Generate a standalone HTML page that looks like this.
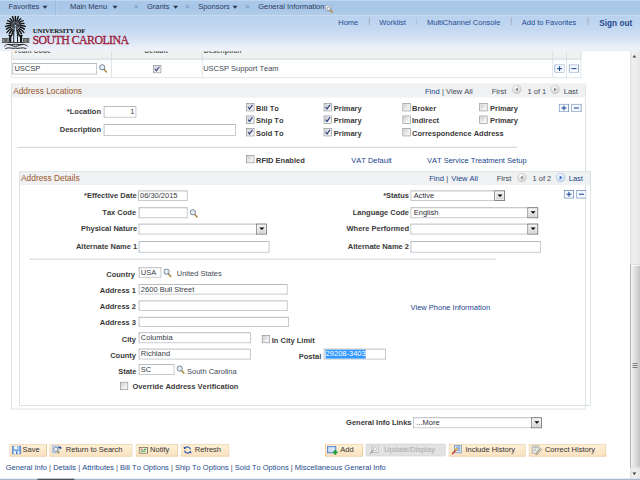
<!DOCTYPE html>
<html><head><meta charset="utf-8"><title>General Information</title>
<style>
html,body{margin:0;padding:0;background:#fff;overflow:hidden}
body{width:640px;height:480px;position:relative;font-family:"Liberation Sans",Arial,sans-serif}
#pg{font-kerning:none;position:absolute;left:0;top:0;width:1024px;height:768px;transform:scale(0.625);transform-origin:0 0;background:#fff;overflow:hidden;font-size:12px;color:#3c3c3c}
#pg div,#pg svg.ab{position:absolute}
.t{white-space:nowrap;line-height:14px;height:14px;font-size:12px}
#nav{left:0;top:0;width:1024px;height:25px;background:linear-gradient(#bdd5ef 0,#bdd5ef 1px,#a9c7e8 2px,#a9c7e8 60%,#b1cdea 100%)}
#nav .sep{top:0;width:1px;height:25px;background:#94b4da;box-shadow:1px 0 0 #c9def3}
.nv{color:#2c3b60}
.nv.gtt{color:#5f7faf;font-size:12px}
.dd{width:0;height:0;border-left:4px solid transparent;border-right:4px solid transparent;border-top:5px solid #2c3448}
#hdr{left:0;top:25px;width:1024px;height:56.5px;background:linear-gradient(#bad2ee 0,#c2d7f0 35%,#d2e0f3 60%,#e2ebf7 82%,#f0f4fa 100%);border-bottom:1px solid #d9dde2;box-sizing:border-box}
.lg1{font-family:"Liberation Serif",serif;font-weight:bold;font-size:11px;color:#111;letter-spacing:-0.25px;line-height:14px}
.lg2{font-family:"Liberation Serif",serif;font-size:21px;color:#9b1a3a;letter-spacing:-0.93px;line-height:28px;height:28px;-webkit-text-stroke:0.5px #9b1a3a;transform:scaleX(0.9);transform-origin:0 0}
.hl{color:#1f4c94}
.so{font-weight:bold;font-size:13.2px;color:#27498c;line-height:16px;height:16px}
.hsep{top:3px;width:1.6px;height:12px;background:#a9b6c8}
#ct{left:0;top:81.5px;width:1007px;height:684.9px;background:#fff;overflow:hidden}
.hd{font-weight:bold;color:#555;font-size:11px}
.v{color:#444a57}
.lb{font-weight:bold;color:#3a3a3a}
.lk{color:#1a458c}
.grp{border:1px solid #c9d2d6;box-sizing:border-box}
.gh{background:#eff1f3}
.t.gt{font-size:13.4px;color:#9a572b;line-height:16px;height:16px}
.in{box-sizing:border-box;border:1px solid #a9adb3;border-top-color:#8e939b;border-left-color:#999da4;background:#fff;font-size:12px;line-height:15px;color:#383d48;padding:0 2px;white-space:nowrap;overflow:hidden}
.sel{box-sizing:border-box;border:1px solid #a9adb3;border-top-color:#8e939b;background:#fff;font-size:12px;line-height:15px;color:#2c2f36;white-space:nowrap}
.sel span{position:absolute;left:4px;top:0}
.sel i{position:absolute;right:-1px;top:-1px;bottom:-1px;width:17px;box-sizing:border-box;border:1px solid #5c5c5c;background:linear-gradient(#f6f6f6,#d2d2d2);box-shadow:inset 0 0 0 1px #fff}
.sel i b{position:absolute;left:3.5px;top:5.4px;width:0;height:0;border-left:4px solid transparent;border-right:4px solid transparent;border-top:4.6px solid #000}
.cb{width:13px;height:13px;box-sizing:border-box;border:1px solid #85898f;background:linear-gradient(135deg,#c4c6c8,#eeeeee 60%,#fafafa);box-shadow:inset 0 0 0 1px rgba(255,255,255,.55)}
.cb svg{position:absolute;left:-1px;top:-1px}
.selx{background:#3399ff;color:#fff;display:inline-block;line-height:15px;height:15px}
.btn{box-sizing:border-box;border:1px solid #e4b578;border-bottom-color:#d69f58;border-right-color:#d69f58;background:linear-gradient(#fdf0d8,#fae3c0);font-size:12px;color:#333;box-shadow:0 1px 0 #ecd2ae}
.btn svg{position:absolute}
.btn span{position:absolute;top:0.8px;line-height:14px;white-space:nowrap}
.btn{border-radius:2px}
.btn.foc{border-color:#efaf5e;border-bottom-color:#e29a48;border-right-color:#e29a48}
.btn.dis{border-color:#d0d0d0;background:#e2e2e2;color:#a9a9a9;box-shadow:none}
.bl{color:#444}
.lk2{color:#1c4a8e}
.bar{color:#4a4a5a}
#sb{left:1007.5px;top:81.5px;width:16.5px;height:684.9px;background:linear-gradient(90deg,#e0e0e0,#efefef 25%,#ececec 70%,#e6e6e6)}
#sb .up{left:4.5px;top:6.5px;width:0;height:0;border-left:3.5px solid transparent;border-right:3.5px solid transparent;border-bottom:4px solid #444}
#sb .dn{left:4.5px;top:674.5px;width:0;height:0;border-left:3.5px solid transparent;border-right:3.5px solid transparent;border-top:4px solid #333}
#sb .th{left:0px;top:341.5px;width:16.5px;height:325px;box-sizing:border-box;border:1px solid #929292;border-right:0;border-radius:2px 0 0 2px;background:linear-gradient(90deg,#f4f4f4,#dedede 50%,#c4c4c4);box-shadow:inset 1px 1px 0 #fff}
#sb .th u{position:absolute;left:3.5px;top:156.5px;width:7.500px;height:8px;background:repeating-linear-gradient(#7a7a7a 0,#7a7a7a 1.3px,#fff 1.3px,#fff 2.2px,transparent 2.2px,transparent 3.2px)}
#bs{left:0;top:766.4px;width:1024px;height:1.6px;background:#a7b9cf}
#bs div{left:60px;top:0;width:59px;height:2px;background:#4a4f58}
</style></head>
<body><div id="pg">
<div id="nav">
<div class="sep" style="left:88px"></div>
<div class="t nv" style="left:13.6px;top:3.8px;">Favorites</div>
<div class="dd" style="left:68px;top:9px"></div>
<div class="t nv" style="left:112.0px;top:3.8px;">Main Menu</div>
<div class="dd" style="left:180px;top:9px"></div>
<div class="t nv gtt" style="left:214.0px;top:3.8px;">&gt;</div>
<div class="t nv" style="left:235.0px;top:3.8px;">Grants</div>
<div class="dd" style="left:277px;top:9px"></div>
<div class="t nv gtt" style="left:296.0px;top:3.8px;">&gt;</div>
<div class="t nv" style="left:317.0px;top:3.8px;">Sponsors</div>
<div class="dd" style="left:372px;top:9px"></div>
<div class="t nv gtt" style="left:392.0px;top:3.8px;">&gt;</div>
<div class="t nv" style="left:413.0px;top:3.8px;">General Information</div>
<svg class="ab" style="left:519.5px;top:8.2px" width="14" height="14" viewBox="0 0 14 14"><rect x="0.5" y="0.5" width="10" height="9" fill="#f4f8fc" stroke="#8a9ab0"/><circle cx="6" cy="6" r="3" fill="#e8f0fa" stroke="#707888" stroke-width="1.2"/><line x1="8.5" y1="8.5" x2="12.5" y2="12.5" stroke="#c08820" stroke-width="2"/></svg>
</div>
<div id="hdr">
<svg class="ab" style="left:0px;top:0px" width="50" height="56" viewBox="0 0 50 56">
<g fill="none" stroke="#161616" stroke-width="1.2" stroke-linecap="round"><path d="M23.6 18.4 L21.3 24.0"/><path d="M22.9 18.0 L19.3 22.7"/><path d="M22.5 17.3 L17.8 20.7"/><path d="M22.2 16.6 L16.8 18.3"/><path d="M22.1 15.8 L16.6 15.8"/><path d="M22.3 15.0 L17.1 13.4"/><path d="M22.6 14.4 L18.3 11.3"/><path d="M23.2 13.9 L20.0 9.6"/><path d="M23.9 13.6 L22.2 8.4"/><path d="M24.6 13.5 L24.6 8.0"/><path d="M25.3 13.6 L27.0 8.4"/><path d="M26.0 13.9 L29.2 9.6"/><path d="M26.6 14.4 L30.9 11.3"/><path d="M26.9 15.0 L32.1 13.4"/><path d="M27.1 15.8 L32.6 15.8"/><path d="M27.0 16.6 L32.4 18.3"/><path d="M26.7 17.3 L31.4 20.7"/><path d="M26.3 18.0 L29.9 22.7"/><path d="M25.6 18.4 L27.9 24.0"/></g>
<g fill="none" stroke="#161616" stroke-width="2.3" stroke-linecap="round"><path d="M21.3 24.0 Q19.8 27.6 18.2 32.5"/><path d="M19.3 22.7 Q17.1 25.2 14.9 29.1"/><path d="M17.8 20.7 Q14.4 23.0 11.1 26.8"/><path d="M16.8 18.3 Q13.6 19.2 10.3 21.6"/><path d="M16.6 15.8 Q12.7 15.7 8.8 17.3"/><path d="M17.1 13.4 Q14.0 12.2 10.9 12.5"/><path d="M18.3 11.3 Q15.2 8.9 12.1 8.0"/><path d="M20.0 9.6 Q18.1 6.6 16.2 5.0"/><path d="M22.2 8.4 Q21.1 4.3 19.9 1.6"/><path d="M24.6 8.0 Q24.6 4.1 24.6 1.3"/><path d="M27.0 8.4 Q28.1 4.3 29.3 1.6"/><path d="M29.2 9.6 Q31.1 6.6 33.0 5.0"/><path d="M30.9 11.3 Q34.0 8.9 37.1 8.0"/><path d="M32.1 13.4 Q35.2 12.2 38.3 12.5"/><path d="M32.6 15.8 Q36.5 15.7 40.4 17.3"/><path d="M32.4 18.3 Q35.6 19.2 38.9 21.6"/><path d="M31.4 20.7 Q34.8 23.0 38.1 26.8"/><path d="M29.9 22.7 Q32.1 25.2 34.3 29.1"/><path d="M27.9 24.0 Q29.4 27.6 31.0 32.5"/></g>
<g fill="none" stroke="#161616" stroke-width="1.600"><path d="M22.600 22 C21.400 29 22.200 38 21.800 43.500"/><path d="M26.800 22 C28.400 29 27.800 38 28.200 43.500"/></g>
<g fill="#161616"><rect x="14.600" y="32.400" width="3.400" height="10.600"/><rect x="32" y="32.400" width="3.400" height="10.600"/>
<rect x="13.600" y="31" width="5.400" height="1.700"/><rect x="31" y="31" width="5.400" height="1.700"/>
<rect x="3" y="42.600" width="44" height="1.200"/></g>
<rect x="3.6" y="36.800" width="10" height="6" fill="#b4b4b4"/><rect x="4.0" y="37.600" width="1" height="5.200" fill="#2a2a2a"/><rect x="6.1" y="37.600" width="1" height="5.200" fill="#2a2a2a"/><rect x="8.2" y="37.600" width="1" height="5.200" fill="#2a2a2a"/><rect x="10.3" y="37.600" width="1" height="5.200" fill="#2a2a2a"/><rect x="12.4" y="37.600" width="1" height="5.200" fill="#2a2a2a"/><rect x="3.2" y="36.200" width="10.800" height="1.300" fill="#333"/><rect x="36.8" y="36.800" width="10" height="6" fill="#b4b4b4"/><rect x="37.2" y="37.600" width="1" height="5.200" fill="#2a2a2a"/><rect x="39.3" y="37.600" width="1" height="5.200" fill="#2a2a2a"/><rect x="41.4" y="37.600" width="1" height="5.200" fill="#2a2a2a"/><rect x="43.5" y="37.600" width="1" height="5.200" fill="#2a2a2a"/><rect x="45.6" y="37.600" width="1" height="5.200" fill="#2a2a2a"/><rect x="36.4" y="36.200" width="10.800" height="1.300" fill="#333"/>
<g fill="none" stroke="#161616" stroke-width="1.500" stroke-linecap="round">
<path d="M7.500 49 C9 45 15 45.500 18 47.500 C21 49.500 28 49.500 31 47.500 C34 45.500 41 45 44 49"/>
<path d="M9 52.500 C14 49.800 20 53.500 25 52 C30 53.500 36 49.800 41.500 52.500"/>
<path d="M13 46.200 C17 47.500 21 45.800 24.800 45.800 C29 45.800 33 47.500 37 46.200"/>
</g>
</svg>
<div class="t lg1" style="left:52.5px;top:15.8px">UNIVERSITY OF</div>
<div class="t lg2" style="left:51.5px;top:23.6px">SOUTH CAROLINA</div>
<div class="t hl" style="left:541.2px;top:4.0px;">Home</div>
<div class="t hl" style="left:606.8px;top:4.0px;">Worklist</div>
<div class="t hl" style="left:683.2px;top:4.0px;">MultiChannel Console</div>
<div class="t hl" style="left:834.8px;top:4.0px;">Add to Favorites</div>
<div class="t hl so" style="left:958.8px;top:3.6px;">Sign out</div>
<div class="hsep" style="left:590px"></div>
<div class="hsep" style="left:665.5px"></div>
<div class="hsep" style="left:817px"></div>
<div class="hsep" style="left:940px"></div>
</div>
<div id="ct">
<div class="ab" style="left:18.0px;top:-5.5px;width:912.0px;height:19.0px;background:#f0f1f2;border:1px solid #cfd6da;box-sizing:border-box"></div>
<div class="ab" style="left:18.0px;top:13.5px;width:912.0px;height:29.5px;background:#fff;border:1px solid #cfd6da;box-sizing:border-box"></div>
<div class="ab" style="left:178.0px;top:-5.5px;width:0.0px;height:48.0px;border-left:1px solid #cfd6da"></div>
<div class="ab" style="left:323.0px;top:-5.5px;width:0.0px;height:48.0px;border-left:1px solid #cfd6da"></div>
<div class="ab" style="left:884.0px;top:-5.5px;width:0.0px;height:48.0px;border-left:1px solid #cfd6da"></div>
<div class="ab" style="left:906.0px;top:-5.5px;width:0.0px;height:48.0px;border-left:1px solid #cfd6da"></div>
<div class="t hd" style="left:22.0px;top:-8.7px;">Team Code</div>
<div class="t hd" style="left:231.0px;top:-8.7px;">Default</div>
<div class="t hd" style="left:326.0px;top:-8.7px;">Description</div>
<div class="in" style="left:20.0px;top:19.5px;width:135.0px;height:17.5px;text-align:left;">USCSP</div>
<svg class="ab" style="left:158.0px;top:20.5px" width="14" height="15" viewBox="0 0 15 16"><line x1="9" y1="9.5" x2="13.2" y2="14.2" stroke="#a8802a" stroke-width="2.3" stroke-linecap="round"/><circle cx="6" cy="6" r="4.5" fill="#e2eefa" stroke="#64707e" stroke-width="1.4"/></svg>
<div class="cb" style="left:244.5px;top:22.4px;"><svg viewBox="0 0 13 13" width="13" height="13"><path d="M3 6.3 L5.3 9.3 L10 2.8" fill="none" stroke="#3a4a86" stroke-width="2"/></svg></div>
<div class="t v" style="left:325.0px;top:21.1px;">USCSP Support Team</div>
<svg class="ab" style="left:886.8px;top:21.1px" width="16.5" height="13.6" viewBox="0 0 16.5 13.6" preserveAspectRatio="none"><rect x="0.6" y="0.6" width="15.3" height="12.4" fill="#f4f8fd" stroke="#6484b4" stroke-width="1.2"/><rect x="4.3" y="5.95" width="8" height="1.7" fill="#1d4a9c"/><rect x="7.45" y="3" width="1.7" height="7.6" fill="#1d4a9c"/></svg>
<svg class="ab" style="left:910.0px;top:21.1px" width="16.5" height="13.6" viewBox="0 0 16.5 13.6" preserveAspectRatio="none"><rect x="0.6" y="0.6" width="15.3" height="12.4" fill="#f4f8fd" stroke="#6484b4" stroke-width="1.2"/><rect x="4.3" y="5.95" width="8" height="1.7" fill="#1d4a9c"/></svg>
<div class="ab grp" style="left:18.0px;top:52.1px;width:919.0px;height:521.0px;"></div>
<div class="ab gh" style="left:19.0px;top:53.1px;width:917.0px;height:21.5px;"></div>
<div class="t gt" style="left:21.0px;top:56.3px;">Address Locations</div>
<div class="t lk" style="left:680.0px;top:57.7px;">Find</div>
<div class="t v" style="left:707.0px;top:57.7px;">|</div>
<div class="t v" style="left:713.6px;top:57.7px;">View All</div>
<div class="t v" style="left:786.8px;top:57.7px;">First</div>
<svg class="ab" style="left:819.4px;top:53.1px" width="16" height="16" viewBox="0 0 16 16"><defs><radialGradient id="ng1" cx="0.4" cy="0.3" r="0.8"><stop offset="0" stop-color="#ffffff"/><stop offset="1" stop-color="#c9c9c9"/></radialGradient></defs><circle cx="8" cy="8" r="7" fill="url(#ng1)" stroke="#c2c2c2" stroke-width="1"/><polygon points="9.6,4.6 5.4,8 9.6,11.4" fill="#8a8a8a"/></svg>
<div class="t v" style="left:844.0px;top:57.7px;">1 of 1</div>
<svg class="ab" style="left:880.0px;top:53.1px" width="16" height="16" viewBox="0 0 16 16"><defs><radialGradient id="ng2" cx="0.4" cy="0.3" r="0.8"><stop offset="0" stop-color="#ffffff"/><stop offset="1" stop-color="#c9c9c9"/></radialGradient></defs><circle cx="8" cy="8" r="7" fill="url(#ng2)" stroke="#c2c2c2" stroke-width="1"/><polygon points="6.4,4.6 10.6,8 6.4,11.4" fill="#8a8a8a"/></svg>
<div class="t v" style="left:902.0px;top:57.7px;">Last</div>
<div class="t lb" style="right:845.4px;top:89.9px;">*Location</div>
<div class="in" style="left:165.6px;top:88.9px;width:52.5px;height:17.5px;text-align:right;">1</div>
<div class="t lb" style="right:845.4px;top:118.5px;">Description</div>
<div class="in" style="left:165.6px;top:117.7px;width:211.5px;height:17.5px;text-align:left;"></div>
<div class="cb" style="left:393.5px;top:83.4px;"><svg viewBox="0 0 13 13" width="13" height="13"><path d="M3 6.3 L5.3 9.3 L10 2.8" fill="none" stroke="#3a4a86" stroke-width="2"/></svg></div>
<div class="t lb" style="left:409.6px;top:84.5px;">Bill To</div>
<div class="cb" style="left:517.9px;top:83.4px;"><svg viewBox="0 0 13 13" width="13" height="13"><path d="M3 6.3 L5.3 9.3 L10 2.8" fill="none" stroke="#3a4a86" stroke-width="2"/></svg></div>
<div class="t lb" style="left:534.0px;top:84.5px;">Primary</div>
<div class="cb" style="left:643.5px;top:83.4px;"></div>
<div class="t lb" style="left:659.2px;top:84.5px;">Broker</div>
<div class="cb" style="left:767.1px;top:83.4px;"></div>
<div class="t lb" style="left:784.0px;top:84.5px;">Primary</div>
<div class="cb" style="left:393.5px;top:103.2px;"><svg viewBox="0 0 13 13" width="13" height="13"><path d="M3 6.3 L5.3 9.3 L10 2.8" fill="none" stroke="#3a4a86" stroke-width="2"/></svg></div>
<div class="t lb" style="left:409.6px;top:104.3px;">Ship To</div>
<div class="cb" style="left:517.9px;top:103.2px;"><svg viewBox="0 0 13 13" width="13" height="13"><path d="M3 6.3 L5.3 9.3 L10 2.8" fill="none" stroke="#3a4a86" stroke-width="2"/></svg></div>
<div class="t lb" style="left:534.0px;top:104.3px;">Primary</div>
<div class="cb" style="left:643.5px;top:103.2px;"></div>
<div class="t lb" style="left:659.2px;top:104.3px;">Indirect</div>
<div class="cb" style="left:767.1px;top:103.2px;"></div>
<div class="t lb" style="left:784.0px;top:104.3px;">Primary</div>
<div class="cb" style="left:393.5px;top:123.6px;"><svg viewBox="0 0 13 13" width="13" height="13"><path d="M3 6.3 L5.3 9.3 L10 2.8" fill="none" stroke="#3a4a86" stroke-width="2"/></svg></div>
<div class="t lb" style="left:409.6px;top:124.7px;">Sold To</div>
<div class="cb" style="left:517.9px;top:123.6px;"><svg viewBox="0 0 13 13" width="13" height="13"><path d="M3 6.3 L5.3 9.3 L10 2.8" fill="none" stroke="#3a4a86" stroke-width="2"/></svg></div>
<div class="t lb" style="left:534.0px;top:124.7px;">Primary</div>
<div class="cb" style="left:643.5px;top:123.6px;"></div>
<div class="t lb" style="left:659.2px;top:124.7px;">Correspondence Address</div>
<svg class="ab" style="left:894.0px;top:84.0px" width="16.5" height="13.6" viewBox="0 0 16.5 13.6" preserveAspectRatio="none"><rect x="0.6" y="0.6" width="15.3" height="12.4" fill="#f4f8fd" stroke="#6484b4" stroke-width="1.2"/><rect x="4.3" y="5.95" width="8" height="1.7" fill="#1d4a9c"/><rect x="7.45" y="3" width="1.7" height="7.6" fill="#1d4a9c"/></svg>
<svg class="ab" style="left:914.0px;top:84.0px" width="16.5" height="13.6" viewBox="0 0 16.5 13.6" preserveAspectRatio="none"><rect x="0.6" y="0.6" width="15.3" height="12.4" fill="#f4f8fd" stroke="#6484b4" stroke-width="1.2"/><rect x="4.3" y="5.95" width="8" height="1.7" fill="#1d4a9c"/></svg>
<div class="ab" style="left:28.0px;top:153.7px;width:800.0px;height:0.0px;border-top:1.6px solid #b4b4b4"></div>
<div class="cb" style="left:393.5px;top:166.8px;"></div>
<div class="t lb" style="left:409.6px;top:167.5px;">RFID Enabled</div>
<div class="t lk" style="left:562.0px;top:167.5px;">VAT Default</div>
<div class="t lk" style="left:683.2px;top:167.5px;">VAT Service Treatment Setup</div>
<div class="ab grp" style="left:31.0px;top:192.9px;width:914.0px;height:374.6px;"></div>
<div class="ab gh" style="left:32.0px;top:193.9px;width:912.0px;height:20.2px;"></div>
<div class="t gt" style="left:33.6px;top:196.3px;">Address Details</div>
<div class="t lk" style="left:686.8px;top:197.9px;">Find</div>
<div class="t v" style="left:714.0px;top:197.9px;">|</div>
<div class="t lk" style="left:722.0px;top:197.9px;">View All</div>
<div class="t v" style="left:794.8px;top:197.9px;">First</div>
<svg class="ab" style="left:826.6px;top:194.0px" width="16" height="16" viewBox="0 0 16 16"><defs><radialGradient id="ng3" cx="0.4" cy="0.3" r="0.8"><stop offset="0" stop-color="#ffffff"/><stop offset="1" stop-color="#c9c9c9"/></radialGradient></defs><circle cx="8" cy="8" r="7" fill="url(#ng3)" stroke="#c2c2c2" stroke-width="1"/><polygon points="9.6,4.6 5.4,8 9.6,11.4" fill="#8a8a8a"/></svg>
<div class="t v" style="left:852.0px;top:197.9px;">1 of 2</div>
<svg class="ab" style="left:888.5px;top:194.0px" width="16" height="16" viewBox="0 0 16 16"><defs><radialGradient id="ng4" cx="0.4" cy="0.3" r="0.8"><stop offset="0" stop-color="#ffffff"/><stop offset="1" stop-color="#b9d0f0"/></radialGradient></defs><circle cx="8" cy="8" r="7" fill="url(#ng4)" stroke="#a9c0e4" stroke-width="1"/><polygon points="6.4,4.6 10.6,8 6.4,11.4" fill="#3366cc"/></svg>
<div class="t lk" style="left:910.0px;top:197.9px;">Last</div>
<div class="t lb" style="right:788.5px;top:224.3px;">*Effective Date</div>
<div class="in" style="left:221.0px;top:223.3px;width:79.0px;height:16.5px;text-align:left;">06/30/2015</div>
<div class="t lb" style="right:352.6px;top:224.3px;">*Status</div>
<div class="sel" style="left:657.0px;top:223.3px;width:151.0px;height:16.5px;"><span>Active</span><i><b></b></i></div>
<svg class="ab" style="left:902.0px;top:222.9px" width="16.5" height="13.6" viewBox="0 0 16.5 13.6" preserveAspectRatio="none"><rect x="0.6" y="0.6" width="15.3" height="12.4" fill="#f4f8fd" stroke="#6484b4" stroke-width="1.2"/><rect x="4.3" y="5.95" width="8" height="1.7" fill="#1d4a9c"/><rect x="7.45" y="3" width="1.7" height="7.6" fill="#1d4a9c"/></svg>
<svg class="ab" style="left:921.6px;top:222.9px" width="16.5" height="13.6" viewBox="0 0 16.5 13.6" preserveAspectRatio="none"><rect x="0.6" y="0.6" width="15.3" height="12.4" fill="#f4f8fd" stroke="#6484b4" stroke-width="1.2"/><rect x="4.3" y="5.95" width="8" height="1.7" fill="#1d4a9c"/></svg>
<div class="t lb" style="right:789.3px;top:251.7px;">Tax Code</div>
<div class="in" style="left:221.6px;top:250.5px;width:78.5px;height:17.2px;text-align:left;"></div>
<svg class="ab" style="left:303.0px;top:252.0px" width="14" height="15" viewBox="0 0 15 16"><line x1="9" y1="9.5" x2="13.2" y2="14.2" stroke="#a8802a" stroke-width="2.3" stroke-linecap="round"/><circle cx="6" cy="6" r="4.5" fill="#e2eefa" stroke="#64707e" stroke-width="1.4"/></svg>
<div class="t lb" style="right:352.6px;top:251.1px;">Language Code</div>
<div class="sel" style="left:657.0px;top:250.5px;width:204.0px;height:17.2px;"><span>English</span><i><b></b></i></div>
<div class="t lb" style="right:787.5px;top:276.5px;">Physical Nature</div>
<div class="sel" style="left:222.4px;top:276.5px;width:205.0px;height:17.2px;"><span></span><i><b></b></i></div>
<div class="t lb" style="right:352.6px;top:276.5px;">Where Performed</div>
<div class="sel" style="left:657.0px;top:276.5px;width:204.0px;height:17.2px;"><span></span><i><b></b></i></div>
<div class="t lb" style="right:787.5px;top:306.5px;">Alternate Name 1</div>
<div class="in" style="left:222.4px;top:304.5px;width:209.0px;height:18.0px;text-align:left;"></div>
<div class="t lb" style="right:352.6px;top:306.5px;">Alternate Name 2</div>
<div class="in" style="left:657.0px;top:304.5px;width:208.0px;height:18.0px;text-align:left;"></div>
<div class="ab" style="left:47.0px;top:332.9px;width:747.0px;height:0.0px;border-top:1.6px solid #b4b4b4"></div>
<div class="t lb" style="right:791.0px;top:350.7px;">Country</div>
<div class="in" style="left:222.4px;top:346.5px;width:35.6px;height:16.0px;text-align:left;">USA</div>
<svg class="ab" style="left:261.0px;top:347.0px" width="14" height="15" viewBox="0 0 15 16"><line x1="9" y1="9.5" x2="13.2" y2="14.2" stroke="#a8802a" stroke-width="2.3" stroke-linecap="round"/><circle cx="6" cy="6" r="4.5" fill="#e2eefa" stroke="#64707e" stroke-width="1.4"/></svg>
<div class="t v" style="left:282.8px;top:349.1px;">United States</div>
<div class="t lb" style="right:789.4px;top:376.3px;">Address 1</div>
<div class="in" style="left:222.4px;top:373.3px;width:237.6px;height:16.0px;text-align:left;">2600 Bull Street</div>
<div class="t lb" style="right:789.4px;top:401.1px;">Address 2</div>
<div class="in" style="left:222.4px;top:399.3px;width:237.6px;height:16.4px;text-align:left;"></div>
<div class="t lb" style="right:789.4px;top:427.5px;">Address 3</div>
<div class="in" style="left:222.4px;top:425.3px;width:239.6px;height:16.4px;text-align:left;"></div>
<div class="t lb" style="right:789.4px;top:454.7px;">City</div>
<div class="in" style="left:222.4px;top:450.5px;width:178.8px;height:17.2px;text-align:left;">Columbia</div>
<div class="cb" style="left:419.1px;top:454.0px;"></div>
<div class="t lb" style="left:434.8px;top:455.5px;">In City Limit</div>
<div class="t lb" style="right:789.4px;top:480.7px;">County</div>
<div class="in" style="left:222.4px;top:476.5px;width:178.8px;height:16.8px;text-align:left;">Richland</div>
<div class="t lb" style="right:493.0px;top:481.1px;">Postal</div>
<div class="in" style="left:518.0px;top:476.5px;width:99.2px;height:16.8px;text-align:left;"><span class="selx">29208-3403</span></div>
<div class="t lk" style="left:656.8px;top:403.5px;">View Phone Information</div>
<div class="t lb" style="right:788.6px;top:506.7px;">State</div>
<div class="in" style="left:222.4px;top:501.7px;width:56.4px;height:16.8px;text-align:left;">SC</div>
<svg class="ab" style="left:282.0px;top:502.5px" width="14" height="15" viewBox="0 0 15 16"><line x1="9" y1="9.5" x2="13.2" y2="14.2" stroke="#a8802a" stroke-width="2.3" stroke-linecap="round"/><circle cx="6" cy="6" r="4.5" fill="#e2eefa" stroke="#64707e" stroke-width="1.4"/></svg>
<div class="t v" style="left:299.2px;top:506.7px;">South Carolina</div>
<div class="cb" style="left:191.9px;top:529.0px;"></div>
<div class="t lb" style="left:212.0px;top:529.9px;">Override Address Verification</div>
<div class="t lb" style="right:348.6px;top:587.1px;">General Info Links</div>
<div class="sel" style="left:661.2px;top:586.5px;width:206.0px;height:17.2px;"><span>...More</span><i><b></b></i></div>
<div class="btn" style="left:15.0px;top:628.7px;width:59.5px;height:19.5px"><svg width="15" height="14" viewBox="0 0 15 14" style="left:3px;top:1.5px"><rect x="0.5" y="0.5" width="14" height="13" fill="#6f9fe0" stroke="#4a7cc8"/><rect x="3.5" y="1" width="8" height="5" fill="#fff"/><rect x="8.5" y="1.5" width="2" height="3.5" fill="#6f9fe0"/><rect x="3" y="8.5" width="9" height="5.500" fill="#eef3fa"/><rect x="6.500" y="9" width="2.500" height="5" fill="#4a7cc8"/></svg><span style="left:20px">Save</span></div>
<div class="btn" style="left:78.8px;top:628.7px;width:133.7px;height:19.5px"><svg width="17" height="15" viewBox="0 0 17 15" style="left:3px;top:1px"><rect x="0.5" y="1.5" width="11" height="11" fill="#cfe0f6" stroke="#7fa6dc"/><circle cx="6.200" cy="7" r="3.300" fill="#eef4fc" stroke="#6a7486" stroke-width="1.200"/><line x1="8.500" y1="9.500" x2="11.500" y2="13.300" stroke="#b8922c" stroke-width="2"/><path d="M9.500 4.500 C10.500 2.500 12 2.300 13.500 3.500 L13.500 1.500 L16 5 L12 6.500 L13 4.800 C12 4 11 4 10.500 5 z" fill="#1f3f8c"/></svg><span style="left:25.5px">Return to Search</span></div>
<div class="btn" style="left:217.2px;top:628.7px;width:67.6px;height:19.5px"><svg width="15" height="11" viewBox="0 0 15 11" style="left:3.5px;top:3.5px"><rect x="0.600" y="0.600" width="13.500" height="9.600" fill="#fff8e4" stroke="#5a4a3a" stroke-width="1.200"/><rect x="3" y="3" width="3" height="1.600" fill="#c03030"/><rect x="8" y="3" width="4" height="1.600" fill="#2a8a3a"/><rect x="3" y="6" width="8" height="1.600" fill="#2a8a3a"/></svg><span style="left:22px">Notify</span></div>
<div class="btn" style="left:288.8px;top:628.7px;width:78.0px;height:19.5px"><svg width="14" height="14" viewBox="0 0 14 14" style="left:3px;top:1.5px"><path d="M11.800 6 A5 5 0 0 0 2.800 4.200" fill="none" stroke="#2b57b0" stroke-width="1.800"/><path d="M2.200 8 A5 5 0 0 0 11.200 9.800" fill="none" stroke="#2b57b0" stroke-width="1.800"/><polygon points="0.500,1.500 5.200,3.200 1.800,6.300" fill="#2b57b0"/><polygon points="13.500,12.500 8.800,10.800 12.200,7.700" fill="#2b57b0"/></svg><span style="left:21.8px">Refresh</span></div>
<div class="btn foc" style="left:520.0px;top:628.7px;width:60.6px;height:19.5px"><svg width="18" height="15" viewBox="0 0 18 15" style="left:2px;top:1.500px"><rect x="0.800" y="1" width="13.500" height="10.500" fill="#a9c8f0" stroke="#4a80cc" stroke-width="1.400"/><rect x="2.800" y="3" width="9.500" height="6.500" fill="#d4e4f8"/><path d="M13.500 7 v7.500 M9.800 10.800 h7.400" stroke="#1f9a36" stroke-width="2.800"/></svg><span style="left:23.5px">Add</span></div>
<div class="btn dis" style="left:585.2px;top:628.7px;width:128.0px;height:19.5px"><svg width="15" height="14" viewBox="0 0 15 14" style="left:5px;top:1.500px"><rect x="4" y="0.500" width="10.500" height="10.500" fill="#ececec" stroke="#a8a8a8"/><circle cx="9" cy="5.500" r="2.600" fill="#f4f4f4" stroke="#b0b0b0"/><line x1="1" y1="13" x2="6.500" y2="7.500" stroke="#a4a4a4" stroke-width="2"/></svg><span style="left:28.3px">Update/Display</span></div>
<div class="btn" style="left:718.0px;top:628.7px;width:123.0px;height:19.5px"><svg width="17" height="16" viewBox="0 0 17 16" style="left:3px;top:0.500px"><rect x="5.500" y="0.500" width="10.500" height="12" fill="#dce8f8" stroke="#4a78c0"/><path d="M8 3.500 h6 M8 6 h6 M8 8.500 h6" stroke="#4a78c0" stroke-width="1.200"/><line x1="1.200" y1="14.800" x2="7.500" y2="7.500" stroke="#c8402a" stroke-width="2.200"/><circle cx="8" cy="6.800" r="1.900" fill="#f0b828"/></svg><span style="left:25.7px">Include History</span></div>
<div class="btn" style="left:846.4px;top:628.7px;width:123.6px;height:19.5px"><svg width="17" height="16" viewBox="0 0 17 16" style="left:3px;top:0.500px"><path d="M1.500 1.500 h10.500 v5.500 l-4.500 6 h-6 z" fill="#fbfbf6" stroke="#808080"/><path d="M3.500 4 h6.500 M3.500 6.500 h5.500 M3.500 9 h3.500" stroke="#8a8a8a" stroke-width="1.100"/><path d="M8 13.800 L14.800 5.500 L16.500 7 L9.800 15.200 L7.500 15.800 z" fill="#efe4c4" stroke="#6a6a6a" stroke-width="0.900"/></svg><span style="left:24.5px">Correct History</span></div>
<div class="t bl" style="left:9.2px;top:659.5px;"><span class="lk2">General Info</span> <span class="bar">|</span> <span class="lk2">Details</span> <span class="bar">|</span> <span class="lk2">Attributes</span> <span class="bar">|</span> <span class="lk2">Bill To Options</span> <span class="bar">|</span> <span class="lk2">Ship To Options</span> <span class="bar">|</span> <span class="lk2">Sold To Options</span> <span class="bar">|</span> <span class="lk2">Miscellaneous General Info</span></div>
</div>
<div id="sb"><div class="up"></div><div class="th"><u></u></div><div class="dn"></div></div>
<div id="bs"><div></div></div>
</div></body></html>
